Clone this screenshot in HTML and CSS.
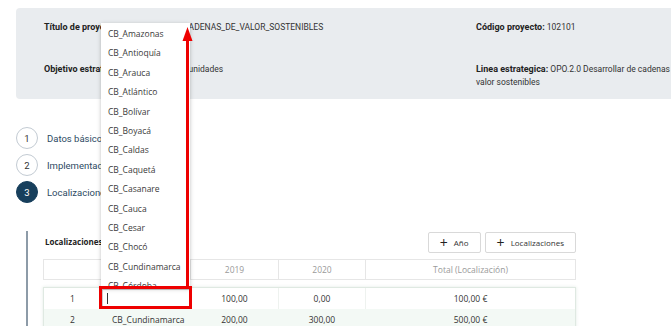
FILE: index.html
```html
<!DOCTYPE html>
<html lang="es">

<head>
    <meta charset="UTF-8">
    <meta name="viewport" content="width=device-width, initial-scale=1.0">
    <title>Proyecto - Localizaciones</title>
    <link rel="stylesheet" href="styles.css">
</head>

<body>
    <!-- Resumen del proyecto -->
    <div class="summary">
        <div class="field"><b>Título de proyecto:</b> DESARROLLAR_CADENAS_DE_VALOR_SOSTENIBLES</div>
        <div class="field"><b>Código proyecto:</b> 102101</div>
        <div class="field field-low"><b>Objetivo estratégico:</b> OPO.2.0 - Oportunidades</div>
        <div class="field field-low"><b>Linea estrategica:</b> OPO.2.0 Desarrollar de cadenas de valor sostenibles</div>
    </div>

    <!-- Pasos -->
    <div class="steps">
        <div class="step"><span class="step-num">1</span>Datos básicos</div>
        <div class="step"><span class="step-num">2</span>Implementadores</div>
        <div class="step active"><span class="step-num">3</span>Localizaciones</div>
    </div>

    <div class="content">
        <div class="toolbar">
            <span class="toolbar-title">Localizaciones</span>
            <button class="btn"><span class="plus">+</span> Año</button>
            <button class="btn"><span class="plus">+</span> Localizaciones</button>
        </div>

        <div class="grid grid-head">
            <div></div>
            <div></div>
            <div>2019</div>
            <div>2020</div>
            <div>Total (Localización)</div>
        </div>

        <div class="grid-body">
            <div class="grid row">
                <div>1</div>
                <div class="cell-input"><span class="input"><span class="caret"></span></span></div>
                <div>100,00</div>
                <div>0,00</div>
                <div>100,00 €</div>
            </div>
            <div class="grid row row-alt">
                <div>2</div>
                <div class="cell-left">CB_Cundinamarca</div>
                <div>200,00</div>
                <div>300,00</div>
                <div>500,00 €</div>
            </div>
        </div>
    </div>

    <!-- Lista desplegable abierta sobre el campo -->
    <ul class="dropdown">
        <li>CB_Amazonas</li>
        <li>CB_Antioquía</li>
        <li>CB_Arauca</li>
        <li>CB_Atlántico</li>
        <li>CB_Bolívar</li>
        <li>CB_Boyacá</li>
        <li>CB_Caldas</li>
        <li>CB_Caquetá</li>
        <li>CB_Casanare</li>
        <li>CB_Cauca</li>
        <li>CB_Cesar</li>
        <li>CB_Chocó</li>
        <li>CB_Cundinamarca</li>
        <li>CB_Córdoba</li>
    </ul>

    <!-- Marcas rojas -->
    <svg class="marks" width="671" height="326" viewBox="0 0 671 326">
        <rect x="100.5" y="287.5" width="90" height="20" fill="none" stroke="#ee0000" stroke-width="3" />
        <line x1="187.5" y1="40" x2="187.5" y2="287" stroke="#ee0000" stroke-width="3" />
        <polygon points="187.5,27 182.5,41 192.5,41" fill="#ee0000" />
    </svg>
</body>

</html>
```
FILE: styles.css
```css
body {
    margin: 0;
    font-family: Roboto, "Liberation Sans", sans-serif;
    font-size: 8.5px;
    color: #333;
    position: relative;
    width: 671px;
    height: 326px;
    overflow: hidden;
}

.summary {
    margin: 8px 0 0 16px;
    padding: 13px 0 10px 28px;
    background: #e9ecef;
    border-radius: 4px 0 0 4px;
    display: grid;
    grid-template-columns: 432px 225px;
    row-gap: 29px;
    line-height: 13px;
    color: #333;
}

.field b {
    color: #222;
    font-size: 9px;
}

.steps {
    margin: 28px 0 0 16px;
    display: flex;
    flex-direction: column;
    gap: 5px;
}

.step {
    display: flex;
    align-items: center;
    gap: 9px;
    font-size: 9.5px;
    color: #2d4a63;
}

.step-num {
    width: 20px;
    height: 20px;
    border: 1px solid #c3cbd3;
    border-radius: 50%;
    display: flex;
    align-items: center;
    justify-content: center;
    background: #fff;
    color: #333;
}

.step.active .step-num {
    background: #173f5c;
    border-color: #173f5c;
    color: #fff;
}

.content {
    margin: 28px 0 0 26px;
    padding-left: 15px;
    border-left: 2px solid #8d9ba8;
    width: 533px;
    height: 100px;
    font-family: "Open Sans", sans-serif;
    font-size: 8.5px;
}

.toolbar {
    display: flex;
    align-items: center;
    gap: 4px;
    padding-top: 1px;
}

.toolbar-title {
    flex: 1;
    font-weight: bold;
    font-size: 8px;
    color: #222;
    margin-left: 2px;
    margin-top: -2px;
}

.btn {
    height: 21px;
    padding: 0 11px;
    border: 1px solid #d9d9d9;
    border-radius: 2px;
    background: #fff;
    font-family: "Open Sans", sans-serif;
    font-size: 8px;
    color: #333;
}

.plus {
    font-size: 14px;
    vertical-align: -2px;
    margin-right: 4px;
    color: #222;
}

.grid {
    display: grid;
    grid-template-columns: 57px 89px 88px 87px 1fr;
}

.grid > div {
    display: flex;
    align-items: center;
    justify-content: center;
}

.grid-head {
    margin-top: 6px;
    height: 19px;
    border: 1px solid #e6e6e6;
    color: #9a9a9a;
}

.grid-head > div + div {
    border-left: 1px solid #e6e6e6;
}

.grid-body {
    margin-top: 7px;
    border: 1px solid #dfe9e2;
    box-shadow: 0 0 3px rgba(60, 120, 80, 0.15);
}

.row {
    height: 21px;
    color: #333;
}

.row > div + div {
    border-left: 1px solid #eef2ef;
}

.row-alt {
    background: #f3f9f5;
}

.row-alt > div + div {
    border-left-color: #f3f9f5;
}

.cell-left {
    justify-content: flex-start !important;
    padding-left: 10px;
}

.input {
    width: 88px;
    height: 17px;
    border: 1px solid #ccc;
    background: #fff;
    display: flex;
    align-items: center;
}

.caret {
    width: 1px;
    height: 11px;
    margin-left: 4px;
    background: #333;
}

.dropdown {
    position: absolute;
    left: 101px;
    top: 23px;
    width: 89px;
    height: 264px;
    margin: 0;
    padding: 1px 0 0;
    list-style: none;
    overflow: hidden;
    background: #fff;
    box-shadow: 0 1px 4px rgba(0, 0, 0, 0.25);
    font-family: "Open Sans", sans-serif;
    font-size: 8.5px;
    color: #3a3a3a;
}

.dropdown li {
    height: 19.4px;
    line-height: 19.4px;
    padding-left: 7px;
}

.marks {
    position: absolute;
    left: 0;
    top: 0;
    pointer-events: none;
}
```
